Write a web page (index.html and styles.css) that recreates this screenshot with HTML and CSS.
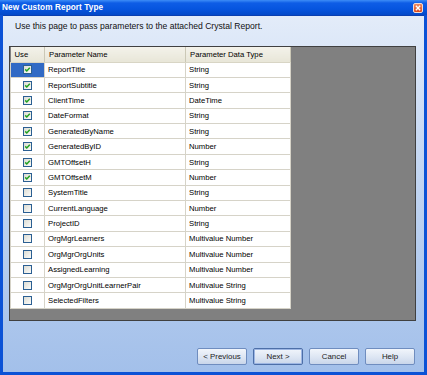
FILE: index.html
```html
<!DOCTYPE html>
<html lang="en">
<head>
<meta charset="utf-8">
<title>New Custom Report Type</title>
<link rel="stylesheet" href="styles.css">
</head>
<body>
<div class="window">
  <div class="titlebar">
    <span class="title">New Custom Report Type</span>
    <span class="close">
      <svg width="7" height="7" viewBox="0 0 7 7"><path d="M1 1 L6 6 M6 1 L1 6" stroke="#fff" stroke-width="1.6" fill="none"/></svg>
    </span>
  </div>
  <div class="body">
    <p class="intro">Use this page to pass parameters to the attached Crystal Report.</p>

    <div class="grid">
      <table class="params">
        <thead>
          <tr><th class="use">Use</th><th class="name">Parameter Name</th><th class="type">Parameter Data Type</th></tr>
        </thead>
        <tbody>
          <tr><td class="use selected"><span class="check on"></span></td><td>ReportTitle</td><td>String</td></tr>
          <tr><td class="use"><span class="check on"></span></td><td>ReportSubtitle</td><td>String</td></tr>
          <tr><td class="use"><span class="check on"></span></td><td>ClientTime</td><td>DateTime</td></tr>
          <tr><td class="use"><span class="check on"></span></td><td>DateFormat</td><td>String</td></tr>
          <tr><td class="use"><span class="check on"></span></td><td>GeneratedByName</td><td>String</td></tr>
          <tr><td class="use"><span class="check on"></span></td><td>GeneratedByID</td><td>Number</td></tr>
          <tr><td class="use"><span class="check on"></span></td><td>GMTOffsetH</td><td>String</td></tr>
          <tr><td class="use"><span class="check on"></span></td><td>GMTOffsetM</td><td>Number</td></tr>
          <tr><td class="use"><span class="check"></span></td><td>SystemTitle</td><td>String</td></tr>
          <tr><td class="use"><span class="check"></span></td><td>CurrentLanguage</td><td>Number</td></tr>
          <tr><td class="use"><span class="check"></span></td><td>ProjectID</td><td>String</td></tr>
          <tr><td class="use"><span class="check"></span></td><td>OrgMgrLearners</td><td>Multivalue Number</td></tr>
          <tr><td class="use"><span class="check"></span></td><td>OrgMgrOrgUnits</td><td>Multivalue Number</td></tr>
          <tr><td class="use"><span class="check"></span></td><td>AssignedLearning</td><td>Multivalue Number</td></tr>
          <tr><td class="use"><span class="check"></span></td><td>OrgMgrOrgUnitLearnerPair</td><td>Multivalue String</td></tr>
          <tr><td class="use"><span class="check"></span></td><td>SelectedFilters</td><td>Multivalue String</td></tr>
        </tbody>
      </table>
    </div>

    <div class="buttons">
      <button class="btn">&lt; Previous</button>
      <button class="btn default">Next &gt;</button>
      <button class="btn">Cancel</button>
      <button class="btn">Help</button>
    </div>
  </div>
</div>
</body>
</html>
```

FILE: styles.css
```css
body
{
	margin:0;
	font-family:"Liberation Sans", Arial, sans-serif;
}
.window
{
	width:427px;
	height:375px;
	display:flex;
	flex-direction:column;
	background:#0b52d6;
}
.titlebar
{
	height:15px;
	display:flex;
	align-items:center;
	justify-content:space-between;
	padding:0 4px 0 2px;
	background:linear-gradient(#3d8df7 0, #0e5de6 3px, #0655df 9px, #0349c8 15px);
}
.title
{
	color:#fff;
	font-weight:bold;
	font-size:8.2px;
	letter-spacing:0.1px;
}
.close
{
	width:10px;
	height:10px;
	box-sizing:border-box;
	border:1px solid #f4dcd2;
	border-radius:2px;
	background:linear-gradient(#f08a60, #d94a1e);
	display:flex;
	align-items:center;
	justify-content:center;
}
.close svg
{
	width:6px;
	height:6px;
}
.body
{
	flex:1;
	margin:0 3px 3px 3px;
	background:linear-gradient(#e3ecf9 0, #c9daf3 120px, #a3c0ea 100%);
	display:flex;
	flex-direction:column;
	border-top:1px solid #0a3fb0;
}
.intro
{
	margin:5px 0 0 12px;
	font-size:8.6px;
	line-height:10px;
	color:#111;
}
.grid
{
	margin:15px 0 0 6px;
	width:407px;
	height:275px;
	box-sizing:border-box;
	border:1px solid #404040;
	background:#808080;
}
.params
{
	border-collapse:collapse;
	font-size:7.7px;
	color:#000;
}
.params th
{
	height:15px;
	padding:0 0 0 4px;
	box-sizing:border-box;
	text-align:left;
	font-weight:normal;
	background:linear-gradient(#f3f2ea, #e8e6d8);
	border-right:1px solid #cbc8b6;
	border-bottom:1px solid #d8d5c5;
}
.params th.use { width:34px; }
.params th.name { width:141px; }
.params th.type { width:105px; }
.params td
{
	height:15.4px;
	padding:0 0 0 3px;
	box-sizing:border-box;
	background:#fff;
	border:1px solid #d6d3c8;
	white-space:nowrap;
}
.params td.use
{
	padding:0;
	text-align:center;
	line-height:0;
}
.params td.selected
{
	background:#316ac5;
}
.check
{
	display:inline-block;
	width:9px;
	height:9px;
	box-sizing:border-box;
	border:1px solid #2b5f92;
	background:linear-gradient(135deg, #dcdcd4, #fbfbf8);
	vertical-align:middle;
}
.check.on
{
	background:url("data:image/svg+xml;utf8,<svg xmlns='http://www.w3.org/2000/svg' width='7' height='7' viewBox='0 0 7 7'><path d='M1.2 3.4 L2.8 5 L5.8 1.8' stroke='%2321a121' stroke-width='1.5' fill='none'/></svg>") center no-repeat, linear-gradient(135deg, #dcdcd4, #fbfbf8);
}
.buttons
{
	margin:27px 9px 0 0;
	display:flex;
	justify-content:flex-end;
	gap:6px;
}
.btn
{
	width:50px;
	height:17px;
	padding:0;
	font-family:"Liberation Sans", Arial, sans-serif;
	font-size:7.9px;
	color:#222;
	border:1px solid #6f8dbf;
	border-radius:2px;
	background:linear-gradient(#f1f5fb, #dbe4f2 60%, #c9d6ea);
}
.btn.default
{
	box-shadow:inset 0 0 0 1px #9db6e3;
	border-color:#4d6fa8;
}
```
